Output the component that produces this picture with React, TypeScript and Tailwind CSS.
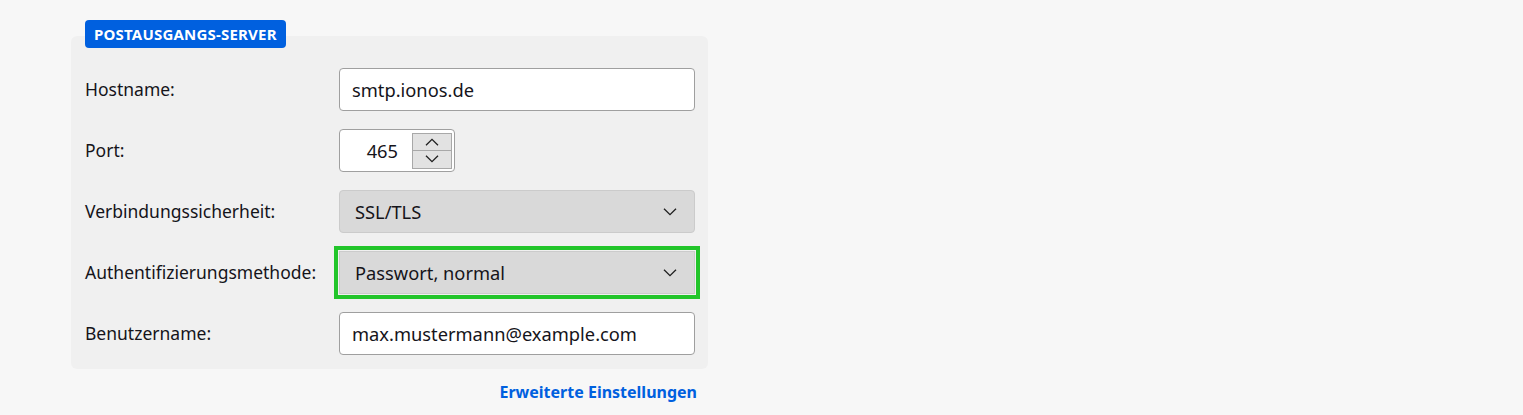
import React from 'react';

const font = { fontFamily: '"Noto Sans", "Open Sans", sans-serif' };

function Chevron({ up = false, className = '' }: { up?: boolean; className?: string }) {
  return (
    <svg viewBox="0 0 14 8" className={className} fill="none" stroke="#1f1f1f" strokeWidth="1.3">
      {up ? <path d="M1 7.3 7 1.3l6 6" /> : <path d="M1 0.7l6 6 6-6" />}
    </svg>
  );
}

function TextInput({ value }: { value: string }) {
  return (
    <div className="h-[43px] w-[356px] rounded-[4px] border border-[#9f9f9f] bg-white pl-[12px] flex items-center text-[18.3px] text-[#15141a]">
      {value}
    </div>
  );
}

function SelectBox({ value, highlight = false }: { value: string; highlight?: boolean }) {
  return (
    <div
      className={`h-[43px] w-[356px] rounded-[4px] border border-[#cbcbcb] bg-[#d9d9d9] pl-[15px] pr-[17px] flex items-center justify-between text-[18.3px] text-[#15141a] ${
        highlight ? 'outline-4 outline-[#22c52a] outline-offset-[1px] rounded-none' : ''
      }`}
    >
      <span>{value}</span>
      <Chevron className="w-[14px] h-[8px]" />
    </div>
  );
}

function PortInput({ value }: { value: string }) {
  return (
    <div className="h-[43px] w-[116px] rounded-[4px] border border-[#9f9f9f] bg-white flex items-center pr-[2px]">
      <span className="flex-1 text-right pr-[14px] text-[18.3px] text-[#15141a]">{value}</span>
      <div className="w-[40px] h-[36px] flex flex-col border border-[#a8a8a8] bg-[#e2e2e2]">
        <div className="flex-1 flex items-center justify-center border-b border-[#a8a8a8]">
          <Chevron up className="w-[14px] h-[8px]" />
        </div>
        <div className="flex-1 flex items-center justify-center">
          <Chevron className="w-[14px] h-[8px]" />
        </div>
      </div>
    </div>
  );
}

export default function App() {
  const rows: { label: string; field: React.ReactNode }[] = [
    { label: 'Hostname:', field: <TextInput value="smtp.ionos.de" /> },
    { label: 'Port:', field: <PortInput value="465" /> },
    { label: 'Verbindungssicherheit:', field: <SelectBox value="SSL/TLS" /> },
    { label: 'Authentifizierungsmethode:', field: <SelectBox value="Passwort, normal" highlight /> },
    { label: 'Benutzername:', field: <TextInput value="max.mustermann@example.com" /> },
  ];

  return (
    <div className="min-h-screen bg-[#f7f7f7] pl-[71px] pt-[20px]" style={font}>
      <div className="w-[637px]">
        <div className="relative z-10 ml-[14px] inline-flex h-[28px] items-center rounded-[4px] bg-[#0060df] px-[9px] text-[15px] font-bold text-white tracking-[0.2px]">
          POSTAUSGANGS-SERVER
        </div>
        <div className="-mt-[12px] rounded-[6px] bg-[#f0f0f0] pl-[14px] pr-[13px] pt-[32px] pb-[14px]">
          <div className="grid grid-cols-[254px_356px] gap-y-[18px]">
            {rows.map((row) => (
              <React.Fragment key={row.label}>
                <div className="flex items-center text-[17.5px] text-[#15141a]">{row.label}</div>
                <div className="flex items-center">{row.field}</div>
              </React.Fragment>
            ))}
          </div>
        </div>
        <div className="mt-[11px] flex justify-end pr-[11px]">
          <a className="text-[16px] font-bold text-[#0060df] leading-[24px] cursor-pointer">Erweiterte Einstellungen</a>
        </div>
      </div>
    </div>
  );
}
